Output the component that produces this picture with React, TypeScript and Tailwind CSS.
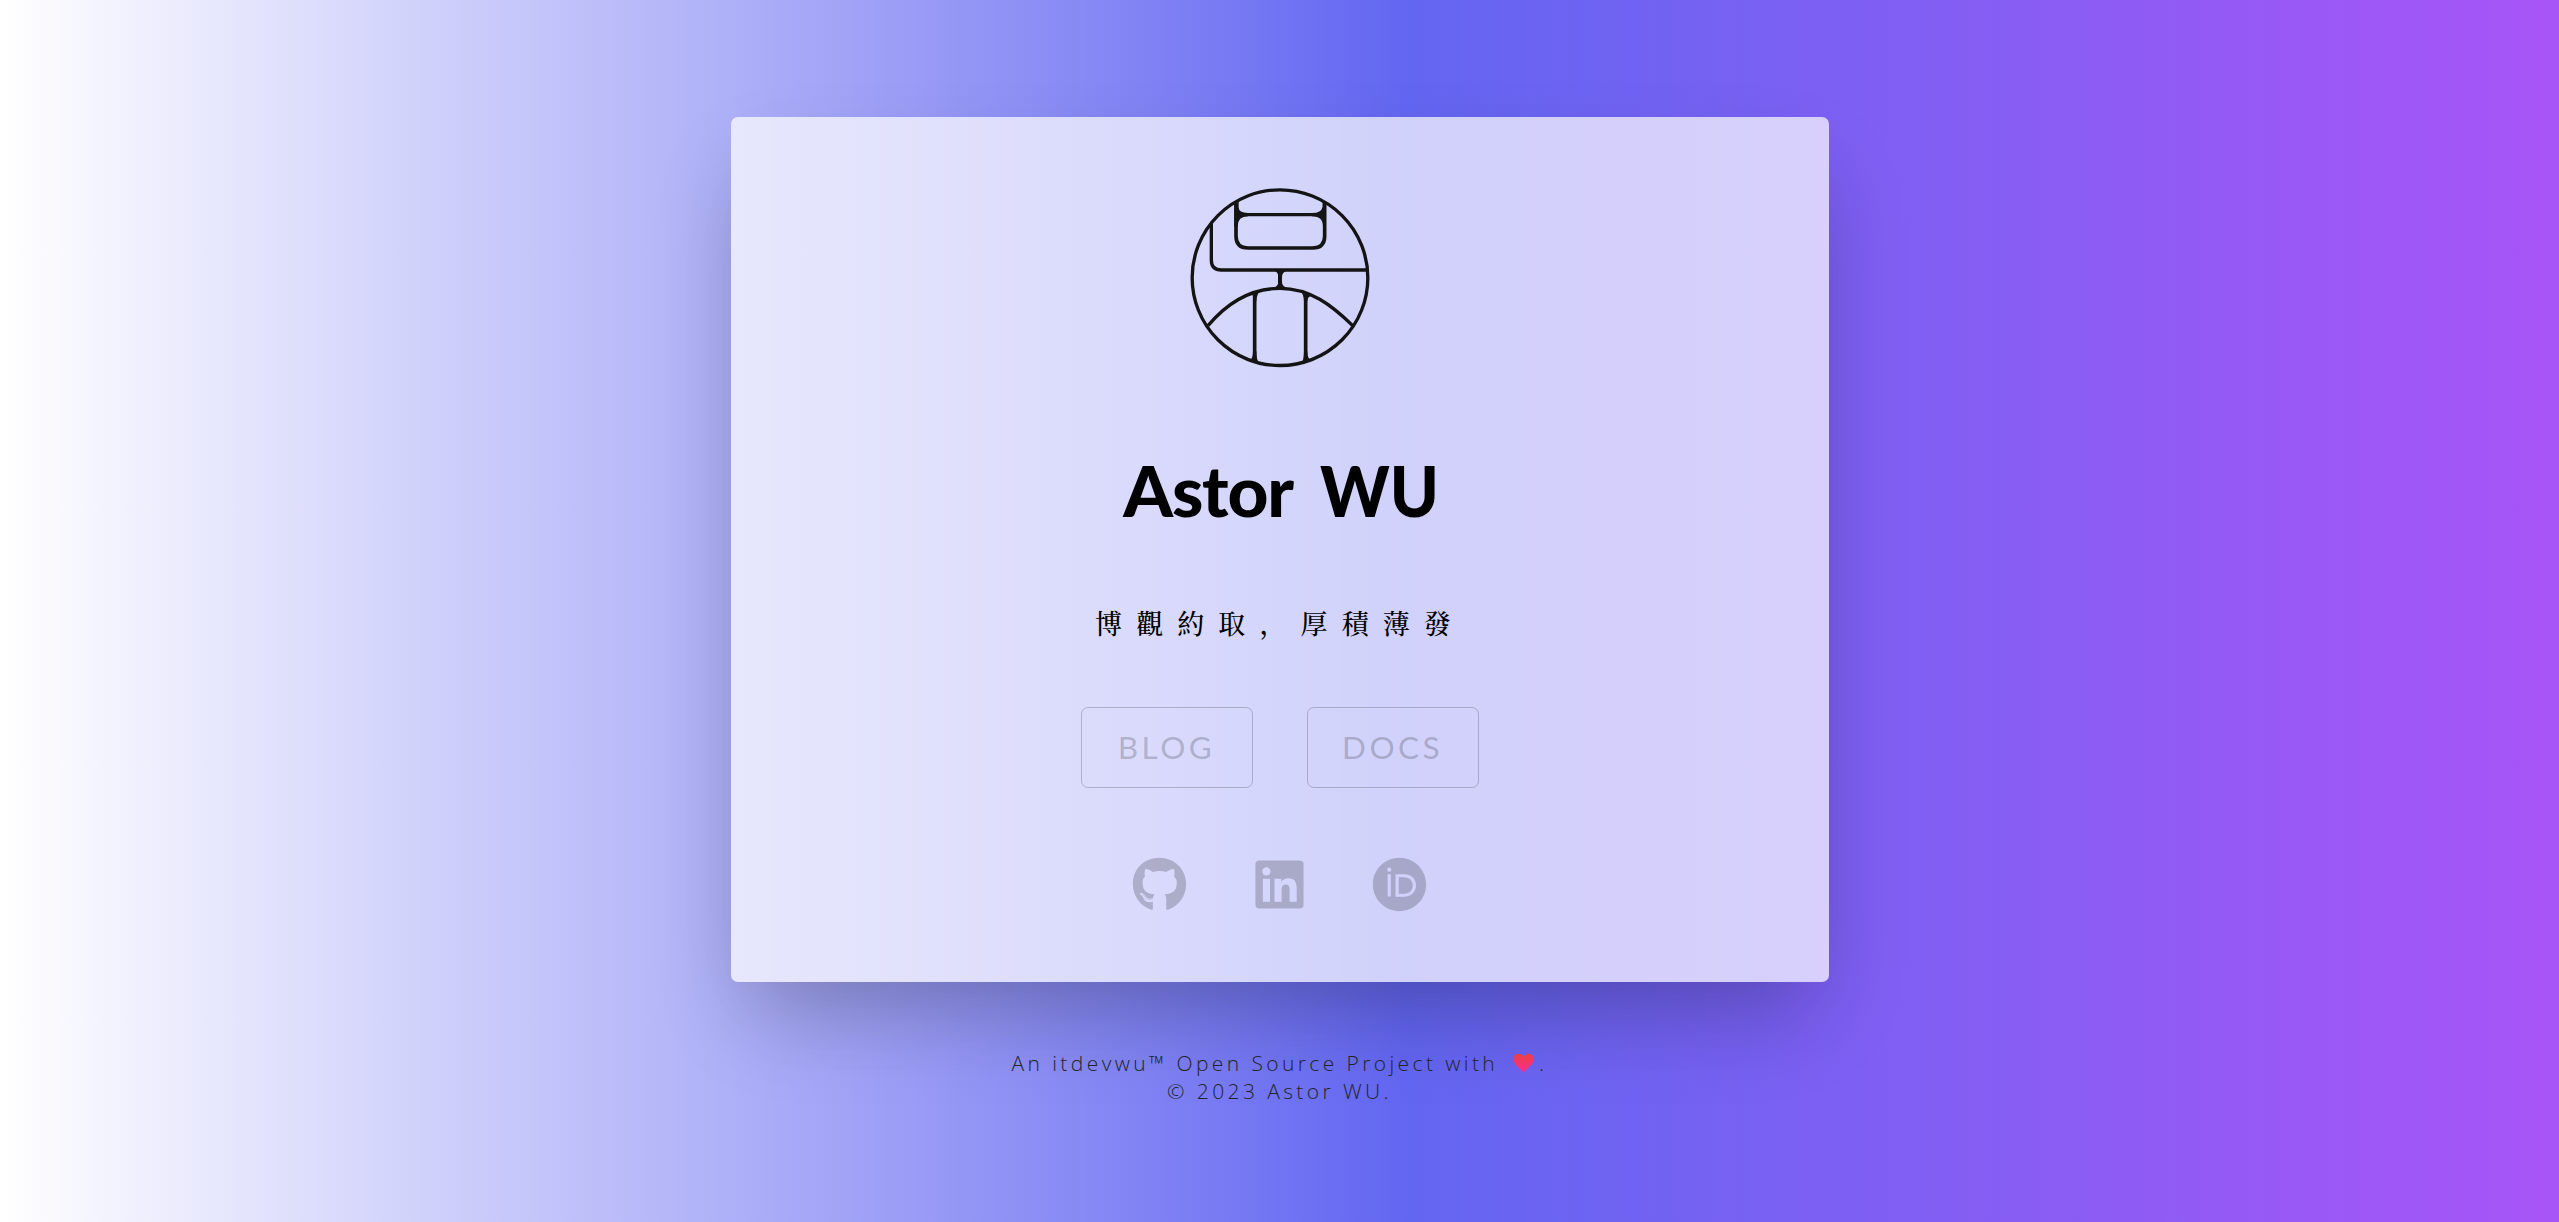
import { FaGithub, FaLinkedin, FaOrcid } from "react-icons/fa";

function Logo() {
  return (
    <svg
      className="h-[195px] w-[200px]"
      viewBox="0 0 600 585"
      fill="none"
      stroke="#141414"
      strokeWidth="10"
      aria-label="Logo"
    >
      <circle cx="300" cy="293" r="263.5" />
      <path d="M94 130V240Q94 270 124 270H563" />
      <path d="M168 66V168Q168 204 204 204H398Q434 204 434 168V66" strokeWidth="11" />
      <path d="M178 104H424" strokeWidth="10" />
      <path
        d="M163 68L176 62V82Q176 99 204 99V109Q173 109 173 140H163ZM438 68L428 62V80Q424 99 396 99V109Q429 109 429 140H438Z"
        fill="#141414"
        stroke="none"
      />
      <path d="M84 437C140 370 210 325 300 325C390 325 455 375 518 437" />
      <path d="M224 338V545M377 338V545" strokeWidth="11" />
      <path d="M300 272V324" strokeWidth="12" />
      <path
        d="M280 270H324Q306 276 306 290V306Q306 320 322 324H278Q295 320 295 306V290Q295 277 280 270ZM212 336L242 332Q229 343 229 364H219V348ZM398 344L360 332Q372 343 372 364H382Q382 348 398 348ZM219 514H229Q229 540 238 550L208 544Q219 536 219 514ZM372 514H382Q382 536 394 544L364 550Q372 540 372 514Z"
        fill="#141414"
        stroke="none"
      />
    </svg>
  );
}

function LinkButton({ children }: { children: string }) {
  return (
    <a className="flex h-[81px] w-[172px] items-center justify-center rounded-[7px] border border-black/20 pt-px font-['Lato'] text-[31.5px] tracking-[3.4px] text-black/20">
      {children}
    </a>
  );
}

export default function App() {
  return (
    <div className="flex h-[1222px] w-full flex-col items-center bg-[linear-gradient(to_right,#ffffff_0%,#6366f1_55%,#a855f7_100%)] pt-[117px]">
      <main className="flex h-[865px] w-[1098px] shrink-0 flex-col items-center rounded-[7px] bg-white/70 pt-[63px] shadow-[0_43px_86px_-20px_rgba(0,0,0,0.25),0_43px_86px_-4px_rgba(0,0,0,0.03)]">
        <Logo />
        <h1 className="mt-[75px] flex h-20 items-center gap-[27px] font-['Lato'] text-[71px] leading-[80px] font-black text-black">
          <span className="tracking-[-1.2px]">Astor</span>
          <span className="-mr-3 origin-left scale-x-[0.93]">WU</span>
        </h1>
        <p
          lang="zh-CN"
          className="mt-[73px] h-10 pl-px font-['Noto_Serif_CJK_SC','Noto_Serif_CJK_TC','Noto_Sans_CJK_TC',serif] text-[27px] leading-10 font-medium tracking-[14.1px] whitespace-nowrap text-black"
        >
          博觀約取，厚積薄發
        </p>
        <div className="mt-[64px] flex gap-[54px]">
          <LinkButton>BLOG</LinkButton>
          <LinkButton>DOCS</LinkButton>
        </div>
        <div className="mt-[69px] flex gap-[65px] text-[55px] text-black/20">
          <FaGithub />
          <FaLinkedin />
          <FaOrcid />
        </div>
      </main>
      <footer className="mt-[67px] flex flex-col items-center font-['Open_Sans'] text-[21px] leading-7 font-light tracking-[3.4px] text-[#212529]">
        <p className="flex items-center whitespace-pre">
          An itdevwu™ Open Source Project with{" "}
          <svg className="ml-1.5 h-5 w-[21px]" viewBox="0 0 22 20">
            <defs>
              <linearGradient id="heart" x1="0" y1="0" x2="0" y2="1">
                <stop offset="0" stopColor="#e8413f" />
                <stop offset="1" stopColor="#ff2a92" />
              </linearGradient>
            </defs>
            <path d="M11 3.500C9-1 0-1 .5 6.500C1 12 7 15 11 20C15 15 21 12 21.500 6.500C22-1 13-1 11 3.500Z" fill="url(#heart)" />
          </svg>
          <span className="ml-[5px]">.</span>
        </p>
        <p>© 2023 Astor WU.</p>
      </footer>
    </div>
  );
}
